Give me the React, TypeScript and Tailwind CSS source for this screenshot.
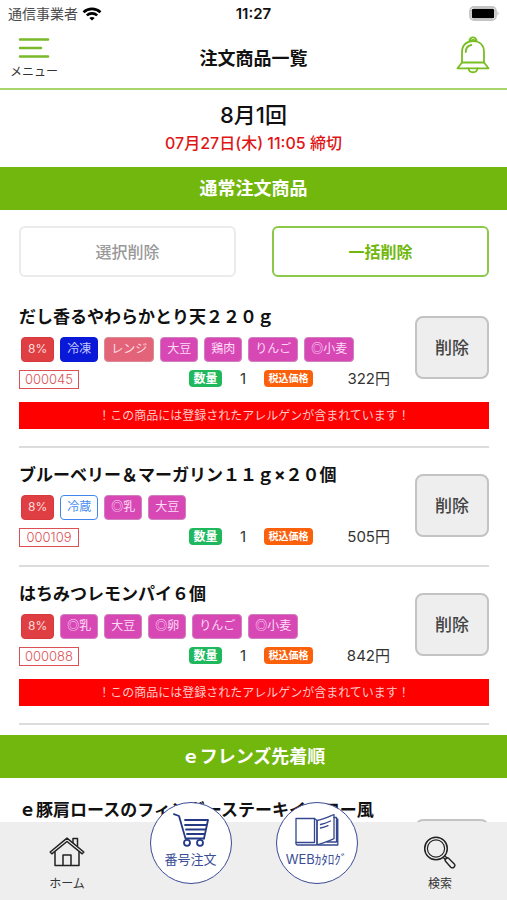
import React from 'react';

type BadgeKind = 'tax' | 'frozen' | 'chilled' | 'range' | 'allergen';

interface Badge {
  label: string;
  kind: BadgeKind;
}

interface Item {
  code: string;
  name: string;
  badges: Badge[];
  quantity: number;
  price: number;
  hasAllergen: boolean;
}

const badgeStyles: Record<BadgeKind, string> = {
  tax: 'bg-[#df3f42] border-[#d63a3d] text-[#ffdcdc]',
  frozen: 'bg-[#0a18d8] border-[#0a18d8] text-[#c4cbff]',
  chilled: 'bg-white border-[#3f86ee] text-[#4a8ef0]',
  range: 'bg-[#e36479] border-[#d98a93] text-[#ffdfe3]',
  allergen: 'bg-[#d748b5] border-[#cf7fbd] text-[#ffdcf5]',
};

const allergen = (label: string): Badge => ({ label, kind: 'allergen' });

const items: Item[] = [
  {
    code: '000045',
    name: 'だし香るやわらかとり天２２０ｇ',
    badges: [
      { label: '8%', kind: 'tax' },
      { label: '冷凍', kind: 'frozen' },
      { label: 'レンジ', kind: 'range' },
      allergen('大豆'),
      allergen('鶏肉'),
      allergen('りんご'),
      allergen('◎小麦'),
    ],
    quantity: 1,
    price: 322,
    hasAllergen: true,
  },
  {
    code: '000109',
    name: 'ブルーベリー＆マーガリン１１ｇ×２０個',
    badges: [
      { label: '8%', kind: 'tax' },
      { label: '冷蔵', kind: 'chilled' },
      allergen('◎乳'),
      allergen('大豆'),
    ],
    quantity: 1,
    price: 505,
    hasAllergen: false,
  },
  {
    code: '000088',
    name: 'はちみつレモンパイ６個',
    badges: [
      { label: '8%', kind: 'tax' },
      allergen('◎乳'),
      allergen('大豆'),
      allergen('◎卵'),
      allergen('りんご'),
      allergen('◎小麦'),
    ],
    quantity: 1,
    price: 842,
    hasAllergen: true,
  },
];

function StatusBar() {
  return (
    <div className="grid h-7 grid-cols-3 items-center px-2">
      <div className="flex items-center gap-1 text-sm text-[#4a4a4a]">
        通信事業者
        <svg viewBox="0 0 20 14" className="h-[14px] w-5" fill="none" stroke="#000" strokeWidth="2.6">
          <path d="M1.5 5.2C6.3.8 13.7.8 18.5 5.2" />
          <path d="M4.8 8.4c3-2.7 7.4-2.7 10.4 0" />
          <path d="M10 13.6 7.3 10.9c1.5-1.3 3.9-1.3 5.4 0z" fill="#000" stroke="none" />
        </svg>
      </div>
      <div className="text-center text-[15px] font-semibold">11:27</div>
      <svg viewBox="0 0 32 16" className="h-4 w-8 justify-self-end">
        <rect x="3" y="1" width="26" height="13" rx="4" fill="#fff" stroke="#c4c4c4" strokeWidth="1.8" />
        <rect x="4.800" y="2.800" width="22.400" height="9.400" rx="1.5" fill="#000" />
        <path d="M30.300 5.500c1.800.6 1.800 3.400 0 4z" fill="#c4c4c4" />
      </svg>
    </div>
  );
}

function Header() {
  return (
    <header className="flex h-[62px] items-center justify-between border-b-2 border-[#a9d66c] px-[11px] pt-0.5">
      <button className="flex w-[46px] flex-col items-center gap-0.5">
        <svg viewBox="0 0 32 24" className="h-6 w-8" stroke="#7ab929" strokeWidth="2.6" strokeLinecap="round">
          <path d="M2 3.500h28M2 12h21M2 20.500h28" />
        </svg>
        <span className="text-xs leading-5 whitespace-nowrap text-[#333]">メニュー</span>
      </button>
      <h1 className="text-lg font-bold">注文商品一覧</h1>
      <button aria-label="お知らせ" className="flex w-[46px] justify-center pb-2">
        <svg viewBox="0 0 34 38" className="h-[38px] w-[34px]" fill="none" stroke="#78bd22" strokeWidth="1.8" strokeLinejoin="round" strokeLinecap="round">
          <path d="M13.500 5.200c-.4-5.200 7.400-5.200 7 0" />
          <path d="M13.800 5c1-1.500 5.400-1.500 6.400 0" />
          <path d="M6 26.500V16C6 9 10.500 5.200 17 5.200S28 9 28 16v10.500" />
          <path d="M6 26.500h22l4.500 5.800h-31z" />
          <path d="M12.500 32.500c.7 5 8.300 5 9 0" />
          <path d="M9.800 16c0-4 1.900-6.400 5.500-7" />
        </svg>
      </button>
    </header>
  );
}

function SectionTitle({ children }: { children: React.ReactNode }) {
  return (
    <h2 className="bg-[#72b70d] text-center text-lg leading-[43px] font-bold text-white">
      {children}
    </h2>
  );
}

function DeleteButton() {
  return (
    <button className="h-[63px] w-[74px] shrink-0 rounded-lg border-2 border-[#c3c3c3] bg-[#eee] pt-0.5 text-[17px] font-medium text-[#444]">
      削除
    </button>
  );
}

function OrderItem({ item }: { item: Item }) {
  return (
    <li className="border-b-2 border-[#dcdcdc] pt-[15px] pb-[17px]">
      <div className="flex items-center justify-between">
        <div className="grow">
          <h3 className="text-[17px] leading-6 font-bold">{item.name}</h3>
          <div className="mt-2 flex gap-1.5 pl-0.5">
            {item.badges.map((badge) => (
              <span
                key={badge.label}
                className={`h-[25px] rounded border px-[6px] text-xs leading-[22px] whitespace-nowrap ${badgeStyles[badge.kind]}`}
              >
                {badge.label}
              </span>
            ))}
          </div>
          <div className="mt-2 flex h-5 items-start">
            <span className="w-[60px] border border-[#dc5055] text-center text-[13px] leading-[17px] font-light text-[#dc5055]">
              {item.code}
            </span>
            <span className="ml-[110px] w-[33px] rounded bg-[#1fb85c] text-center text-xs leading-[17px] font-bold text-white">
              数量
            </span>
            <span className="w-[42px] text-center text-[15px] leading-[17px] text-[#333]">{item.quantity}</span>
            <span className="w-[49px] rounded bg-[#fb600b] text-center text-[10px] leading-[17px] font-bold text-white">
              税込価格
            </span>
            <span className="w-[77px] text-right text-[15px] leading-[17px] text-[#333]">{item.price}円</span>
          </div>
        </div>
        <DeleteButton />
      </div>
      {item.hasAllergen && (
        <p className="mt-3 bg-[#fe0000] text-center text-xs leading-[27px] text-[#ffcaca]">
          ！この商品には登録されたアレルゲンが含まれています！
        </p>
      )}
    </li>
  );
}

function HomeIcon() {
  return (
    <svg viewBox="0 0 36 30" className="h-[30px] w-9" fill="none" stroke="#222" strokeWidth="1.500" strokeLinejoin="round">
      <path d="M1.200 15 18 1.200 34.800 15l-1.600 1.800L18 4.500 2.800 16.800z" />
      <path d="M6 14.500V28.500h24V14.500" />
      <path d="M14 28.500V18h8v10.500" />
      <path d="M24 6V1.500h4.500V9.500" />
    </svg>
  );
}

function SearchIcon() {
  return (
    <svg viewBox="0 0 34 34" className="h-[34px] w-[34px]" fill="none" stroke="#222" strokeWidth="1.400" strokeLinejoin="round">
      <circle cx="13" cy="13.500" r="11.300" strokeWidth="1.500" />
      <circle cx="13" cy="13.500" r="8.600" strokeWidth="1.200" />
      <path d="m20.300 22.500 2.500 2.500M22 21l2.500 2.500" />
      <path d="M22.300 26c-.8-1.500 1.500-3.800 3-3l6 6c1.800 2.300-1.400 5-3.500 3.200z" />
    </svg>
  );
}

function CartIcon() {
  return (
    <svg viewBox="0 0 36 34" className="h-[34px] w-9" fill="none" stroke="#253a85" strokeWidth="1.800" strokeLinejoin="round" strokeLinecap="round">
      <path d="M.9 1.200 6 3l6.500 22.500H31" />
      <path d="M12 7h23l-4 18.500" />
      <path d="M12 12h21M13 16.500h19M14 21h17" />
      <circle cx="14" cy="29.800" r="3" />
      <circle cx="27" cy="29.800" r="3" />
    </svg>
  );
}

function BookIcon() {
  return (
    <svg viewBox="0 0 44 34" className="h-[34px] w-11" fill="none" stroke="#34478f" strokeWidth="1.300" strokeLinejoin="round" strokeLinecap="round">
      <path d="M21 32H2.500C1.500 32 1 31.300 1 30.500V5.500h18.500L22 7.500v24.300" />
      <path d="M1 29.500h18.500V5.500" />
      <path d="M22 7.500c6-1 11-3.500 17-6v24.200c-6 2.600-11 4.800-17 6.100z" />
      <path d="M39 4.500h2.500V29H32M42.800 6v26H23" />
      <path d="M25.500 11.500c3.500-.8 7-2 10-3.500M25.500 15c2.800-.5 5.300-1.400 7.500-2.300" />
    </svg>
  );
}

function BottomNav() {
  return (
    <nav className="absolute inset-x-0 bottom-0 flex h-[78px] items-end justify-between bg-[#eee] px-[27px] text-xs text-[#333]">
      <a href="#home" className="flex w-20 flex-col items-center gap-2 pb-[7px]">
        <HomeIcon />
        <span className="leading-[18px]">ホーム</span>
      </a>
      <div className="flex gap-11 self-start text-[13px] text-[#3a4d96]">
        <a href="#number" className="-mt-5 flex size-[82px] flex-col items-center gap-0.5 rounded-full border border-[#3a4a95] bg-white pt-[10px]">
          <CartIcon />
          <span className="leading-5">番号注文</span>
        </a>
        <a href="#catalog" className="-mt-5 flex size-[82px] flex-col items-center gap-0.5 rounded-full border border-[#3a4a95] bg-white pt-[10px]">
          <BookIcon />
          <span className="leading-5 whitespace-nowrap">WEBｶﾀﾛｸﾞ</span>
        </a>
      </div>
      <a href="#search" className="flex w-20 flex-col items-center gap-[6px] pb-[7px]">
        <SearchIcon />
        <span className="leading-[18px]">検索</span>
      </a>
    </nav>
  );
}

export default function App() {
  return (
    <div className="relative flex h-screen flex-col overflow-hidden bg-white font-[Inter,'Noto_Sans_CJK_JP',sans-serif] text-[#111]">
      <StatusBar />
      <Header />
      <main className="min-h-0 grow overflow-hidden">
        <div className="h-[77px] pt-[10px] text-center">
          <p className="text-[22px] leading-[30px] font-medium">8月1回</p>
          <p className="text-base leading-[26px] font-medium text-[#e01515]">
            07月27日(木) 11:05 締切
          </p>
        </div>
        <SectionTitle>通常注文商品</SectionTitle>
        <div className="grid grid-cols-2 gap-9 pt-4 pr-[18px] pb-[13px] pl-[19px]">
          <button className="h-[51px] rounded-md border-2 border-[#ebebeb] font-medium text-[#999]" disabled>
            選択削除
          </button>
          <button className="h-[51px] rounded-md border-2 border-[#8cc94a] font-bold text-[#72b70d]">
            一括削除
          </button>
        </div>
        <ul className="mb-[10px] pr-[18px] pl-[19px]">
          {items.map((item) => (
            <OrderItem key={item.code} item={item} />
          ))}
        </ul>
        <SectionTitle>ｅフレンズ先着順</SectionTitle>
        <div className="flex justify-between pt-5 pr-[18px] pl-[19px]">
          <h3 className="text-[17px] leading-6 font-bold whitespace-nowrap">
            ｅ豚肩ロースのフィンガーステーキイエロー風
          </h3>
          <div className="pt-[21px]">
            <DeleteButton />
          </div>
        </div>
      </main>
      <BottomNav />
    </div>
  );
}
